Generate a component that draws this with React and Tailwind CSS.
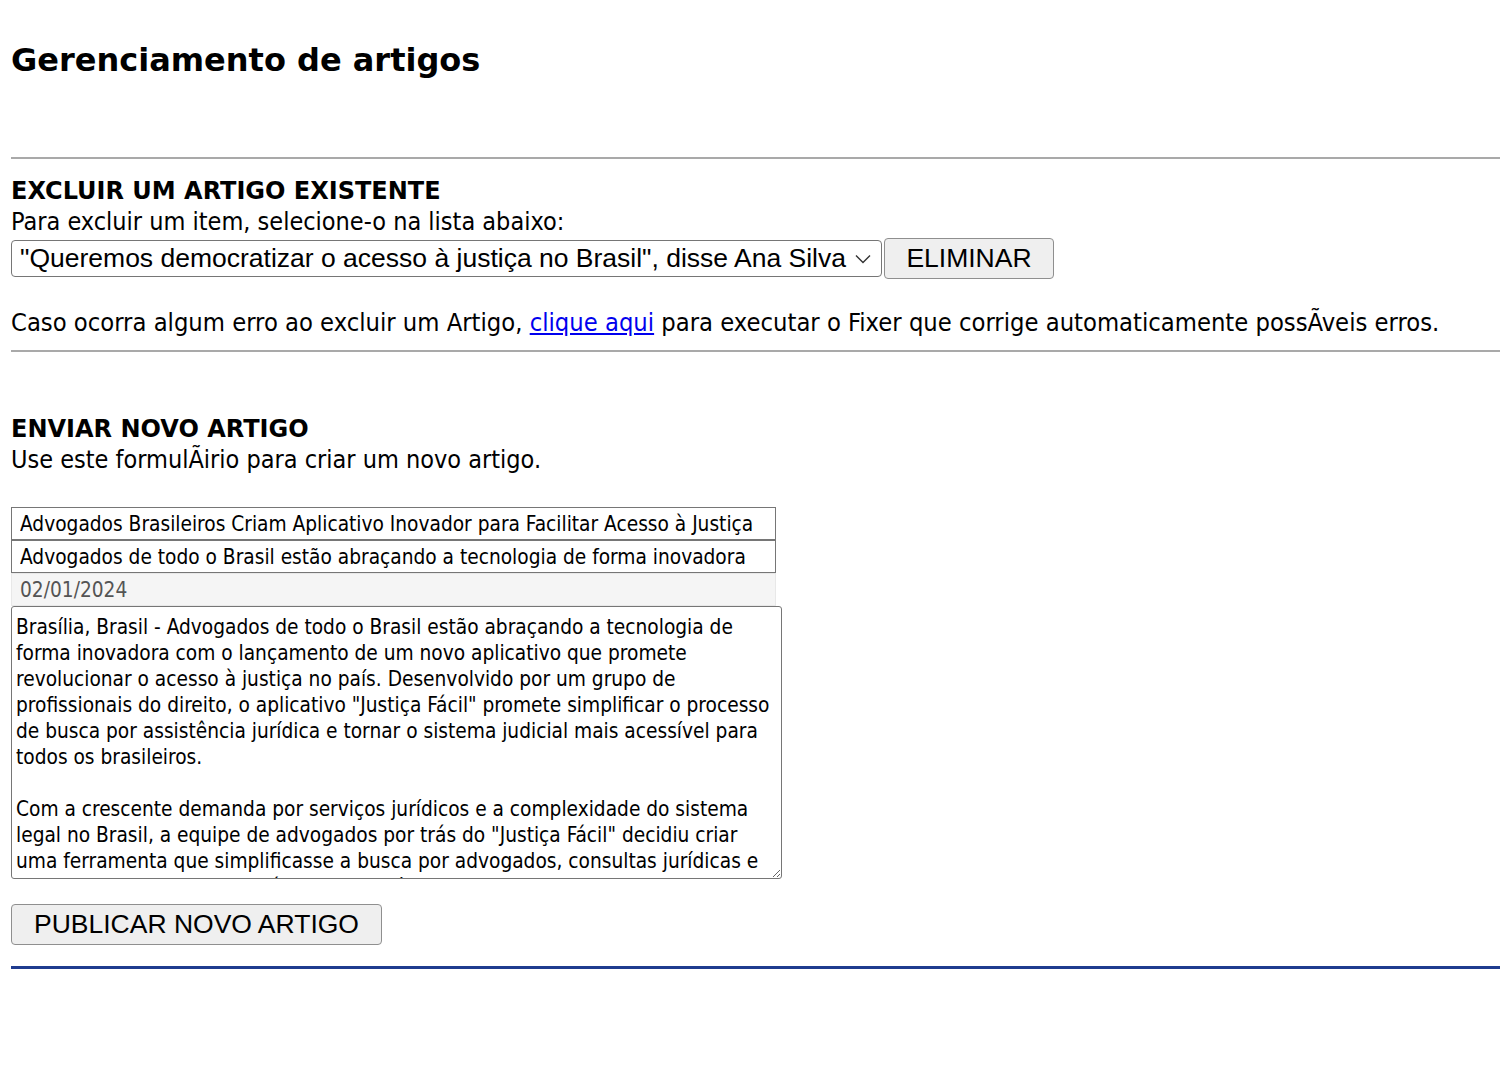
import { useState } from "react";

const body =
  "Brasília, Brasil - Advogados de todo o Brasil estão abraçando a tecnologia de forma inovadora com o lançamento de um novo aplicativo que promete revolucionar o acesso à justiça no país. Desenvolvido por um grupo de profissionais do direito, o aplicativo \"Justiça Fácil\" promete simplificar o processo de busca por assistência jurídica e tornar o sistema judicial mais acessível para todos os brasileiros.\n\nCom a crescente demanda por serviços jurídicos e a complexidade do sistema legal no Brasil, a equipe de advogados por trás do \"Justiça Fácil\" decidiu criar uma ferramenta que simplificasse a busca por advogados, consultas jurídicas e orientação legal de forma rápida e acessível.";

export default function App() {
  const [titulo, setTitulo] = useState(
    "Advogados Brasileiros Criam Aplicativo Inovador para Facilitar Acesso à Justiça"
  );
  const [resumo, setResumo] = useState(
    "Advogados de todo o Brasil estão abraçando a tecnologia de forma inovadora"
  );
  const [texto, setTexto] = useState(body);

  return (
    <div className="min-h-[1070px] bg-white pl-[11px] text-black font-['DejaVu_Sans_Condensed','DejaVu_Sans',sans-serif]">
      <h1 className="pt-[38px] text-[32px] font-bold leading-[44px] font-['DejaVu_Sans','Verdana',sans-serif]">
        Gerenciamento de artigos
      </h1>

      <hr className="mt-[75px] border-t-2 border-[#a9a9a9]" />

      <h2 className="mt-[17px] text-[24px] font-bold leading-[30px] font-['DejaVu_Sans','Verdana',sans-serif]">
        EXCLUIR UM ARTIGO EXISTENTE
      </h2>
      <p className="text-[25px] leading-[32px]">Para excluir um item, selecione-o na lista abaixo:</p>

      <div className="flex items-center">
        <div className="relative flex h-[37px] w-[871px] items-center rounded-[4px] border border-[#767676] bg-white pl-[8px] font-['Liberation_Sans','Arial',sans-serif] text-[26.5px]">
          <span>"Queremos democratizar o acesso à justiça no Brasil", disse Ana Silva</span>
          <svg className="absolute right-[10px] top-[13px]" width="16" height="10" viewBox="0 0 16 10" fill="none">
            <path d="M1 1.5 L8 8.5 L15 1.5" stroke="#333" strokeWidth="1.4" />
          </svg>
        </div>
        <button className="ml-[2px] h-[41px] w-[170px] rounded-[4px] border border-[#8f8f8f] bg-[#efefef] font-['Liberation_Sans','Arial',sans-serif] text-[26.5px]">
          ELIMINAR
        </button>
      </div>

      <p className="mt-[28px] text-[25.3px] leading-[32px]">
        Caso ocorra algum erro ao excluir um Artigo,{" "}
        <a href="#" className="text-[#0000ee] underline">
          clique aqui
        </a>{" "}
        para executar o Fixer que corrige automaticamente possÃveis erros.
      </p>

      <hr className="mt-[11px] border-t-2 border-[#a9a9a9]" />

      <h2 className="mt-[62px] text-[24px] font-bold leading-[30px] font-['DejaVu_Sans','Verdana',sans-serif]">
        ENVIAR NOVO ARTIGO
      </h2>
      <p className="text-[25px] leading-[32px]">Use este formulÃirio para criar um novo artigo.</p>

      <div className="mt-[31px] flex w-[771px] flex-col text-[20.7px]">
        <input
          value={titulo}
          onChange={(e) => setTitulo(e.target.value)}
          className="h-[33px] w-[765px] border border-[#767676] px-[8px] outline-none"
        />
        <input
          value={resumo}
          onChange={(e) => setResumo(e.target.value)}
          className="h-[33px] w-[765px] border border-[#767676] px-[8px] outline-none"
        />
        <input
          value="02/01/2024"
          readOnly
          className="h-[33px] w-[765px] border border-[#e8e8e8] bg-[#f5f5f5] px-[8px] text-[#545454] outline-none"
        />
        <textarea
          value={texto}
          onChange={(e) => setTexto(e.target.value)}
          className="h-[273px] w-[771px] resize rounded-[3px] border border-[#767676] px-[4px] pt-[7px] pb-[1px] leading-[26px] outline-none"
        />
      </div>

      <button className="mt-[25px] h-[41px] w-[371px] rounded-[4px] border border-[#8f8f8f] bg-[#efefef] font-['Liberation_Sans','Arial',sans-serif] text-[26.5px]">
        PUBLICAR NOVO ARTIGO
      </button>

      <hr className="mt-[21px] border-t-[3px] border-[#1f3c8f]" />
    </div>
  );
}
